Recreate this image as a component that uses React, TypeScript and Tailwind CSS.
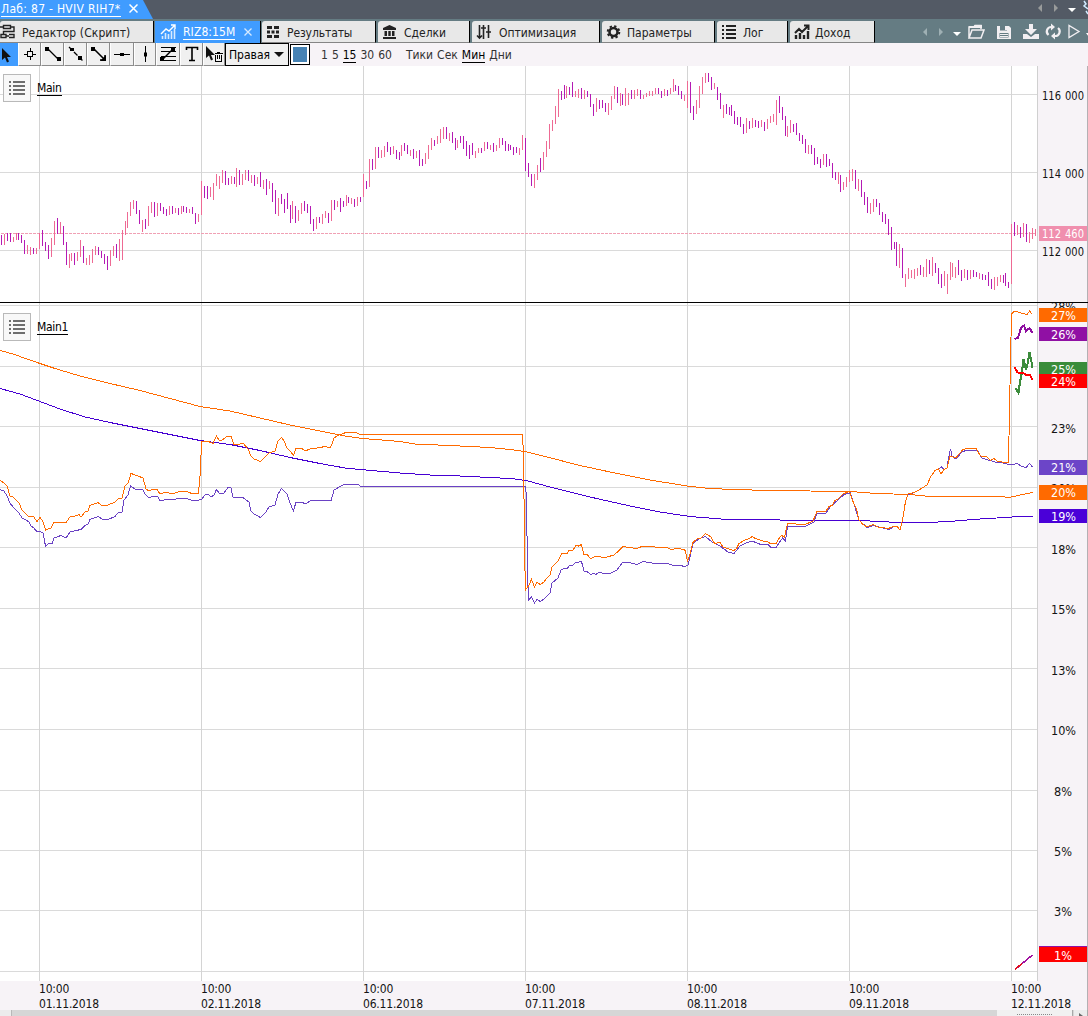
import type { ReactNode } from 'react'

type Bar = [number, number, number]

const GRID_X = [39, 201, 363, 525, 687, 849, 1011]
const PRICE_GRID = [94, 172, 250]
const PCT_GRID = [305, 366, 426, 487, 547, 608, 668, 729, 790, 850, 910, 971]
const DATES = ['01.11.2018', '02.11.2018', '06.11.2018', '07.11.2018', '08.11.2018', '09.11.2018', '12.11.2018']

// x, high, low
const rising: Bar[] = [
  [4, 234, 245], [13, 237, 242], [16, 233, 240], [27, 245, 254], [30, 247, 255], [36, 248, 254], [39, 233, 249],
  [51, 238, 257], [54, 221, 245], [60, 222, 234], [69, 254, 268], [71, 253, 261], [77, 252, 261], [80, 240, 257],
  [86, 258, 265], [89, 255, 265], [92, 249, 263], [95, 246, 255], [110, 250, 266], [113, 246, 256], [119, 239, 261],
  [122, 230, 260], [125, 221, 235], [127, 212, 228], [130, 202, 216], [133, 200, 209], [142, 220, 232], [148, 206, 226],
  [151, 202, 213], [157, 203, 216], [169, 206, 215], [175, 208, 213], [181, 206, 214], [189, 209, 213], [198, 214, 222],
  [201, 181, 215], [210, 187, 197], [213, 183, 200], [216, 174, 186], [219, 176, 189], [222, 170, 183], [231, 176, 184],
  [236, 168, 187], [242, 174, 185], [245, 170, 180], [251, 175, 183], [257, 177, 184], [263, 180, 189], [269, 181, 189],
  [278, 198, 216], [292, 201, 219], [298, 210, 221], [301, 203, 214], [316, 217, 229], [322, 214, 224], [325, 211, 218],
  [331, 200, 221], [337, 201, 207], [346, 195, 206], [351, 198, 204], [357, 197, 206], [363, 174, 197], [369, 159, 187],
  [375, 147, 169], [381, 150, 158], [384, 146, 157], [393, 146, 154], [401, 145, 156], [410, 150, 156], [416, 151, 158],
  [425, 153, 164], [428, 145, 159], [431, 138, 150], [437, 136, 144], [440, 129, 143], [443, 127, 139], [449, 133, 141],
  [457, 140, 148], [475, 151, 158], [478, 148, 153], [484, 142, 151], [490, 145, 150], [496, 145, 151], [499, 138, 148],
  [519, 148, 155], [522, 135, 150], [534, 174, 188], [537, 165, 180], [543, 152, 170], [546, 141, 157], [549, 124, 149],
  [552, 120, 131], [555, 106, 124], [558, 89, 117], [566, 86, 98], [575, 91, 97], [578, 89, 98], [584, 90, 99],
  [596, 98, 112], [608, 103, 115], [611, 96, 110], [614, 86, 99], [620, 93, 106], [625, 88, 106], [628, 93, 105],
  [634, 90, 99], [637, 89, 96], [643, 95, 99], [646, 93, 97], [649, 91, 96], [652, 91, 96], [655, 88, 94],
  [664, 89, 96], [670, 88, 94], [673, 79, 92], [684, 95, 101], [687, 81, 108], [696, 100, 114], [699, 86, 108],
  [702, 77, 94], [705, 73, 83], [714, 83, 89], [723, 105, 118], [746, 118, 133], [752, 118, 128], [761, 120, 127],
  [767, 119, 129], [770, 116, 123], [773, 114, 122], [776, 100, 125], [787, 126, 137], [790, 120, 133], [808, 145, 154],
  [823, 154, 165], [838, 172, 184], [843, 182, 190], [846, 177, 187], [849, 170, 182], [852, 169, 181], [858, 179, 191],
  [870, 203, 214], [873, 199, 212], [899, 244, 268], [905, 274, 287], [908, 268, 279], [911, 270, 278], [914, 269, 279],
  [917, 268, 276], [923, 267, 277], [926, 259, 277], [932, 257, 276], [944, 271, 286], [947, 274, 294], [950, 262, 280],
  [952, 263, 277], [955, 267, 278], [964, 269, 278], [970, 270, 279], [979, 273, 279], [994, 277, 290], [997, 277, 286],
  [1000, 275, 282], [1011, 224, 284], [1017, 225, 235], [1023, 223, 237], [1029, 232, 243], [1032, 228, 239], [1035, 229, 236],
]

const falling: Bar[] = [
  [1, 235, 245], [7, 233, 241], [10, 233, 242], [18, 233, 240], [21, 235, 243], [24, 240, 254], [33, 248, 254],
  [42, 230, 246], [45, 242, 251], [48, 245, 259], [57, 218, 234], [63, 226, 245], [66, 242, 265], [74, 253, 265],
  [83, 246, 263], [98, 247, 255], [101, 251, 258], [104, 254, 264], [107, 256, 270], [116, 244, 258], [136, 201, 214],
  [139, 210, 224], [145, 219, 229], [154, 202, 217], [160, 203, 211], [163, 207, 214], [166, 209, 216], [172, 206, 214],
  [178, 208, 215], [183, 206, 212], [186, 207, 213], [192, 207, 214], [195, 213, 224], [204, 186, 198], [207, 186, 199],
  [225, 171, 185], [228, 178, 185], [234, 177, 184], [239, 170, 185], [248, 170, 181], [254, 175, 186], [260, 172, 187],
  [266, 179, 195], [272, 183, 202], [275, 190, 214], [281, 194, 204], [284, 199, 213], [287, 193, 209], [290, 205, 223],
  [295, 206, 223], [304, 201, 211], [307, 204, 213], [310, 206, 224], [313, 219, 231], [319, 217, 223], [328, 213, 223],
  [334, 200, 210], [340, 198, 212], [343, 201, 207], [348, 197, 203], [354, 199, 207], [360, 197, 202], [366, 181, 189],
  [372, 159, 170], [378, 147, 158], [387, 142, 152], [390, 147, 155], [396, 150, 159], [399, 152, 160], [404, 143, 151],
  [407, 145, 154], [413, 149, 159], [419, 150, 166], [422, 159, 166], [434, 140, 146], [446, 127, 139], [452, 132, 143],
  [455, 138, 150], [460, 136, 143], [463, 136, 149], [466, 141, 156], [469, 145, 159], [472, 143, 155], [481, 148, 153],
  [487, 142, 149], [493, 143, 152], [502, 138, 145], [505, 141, 151], [508, 144, 151], [510, 145, 150], [513, 147, 155],
  [516, 147, 153], [525, 138, 171], [528, 163, 177], [531, 174, 186], [540, 158, 172], [561, 91, 100], [564, 85, 99],
  [569, 87, 95], [572, 82, 97], [581, 88, 99], [587, 91, 97], [590, 94, 107], [593, 104, 116], [599, 100, 109],
  [602, 100, 108], [605, 103, 112], [617, 87, 103], [622, 94, 105], [631, 90, 99], [640, 90, 99], [658, 88, 94],
  [661, 91, 98], [667, 90, 96], [675, 85, 91], [678, 86, 95], [681, 91, 99], [690, 82, 113], [693, 106, 120],
  [708, 73, 82], [711, 77, 90], [717, 87, 100], [720, 93, 109], [726, 104, 114], [729, 107, 115], [731, 105, 116],
  [734, 111, 124], [737, 117, 125], [740, 117, 127], [743, 124, 134], [749, 121, 129], [755, 120, 127], [758, 121, 128],
  [764, 122, 131], [779, 96, 113], [782, 107, 120], [785, 116, 136], [793, 124, 132], [796, 123, 135], [799, 133, 141],
  [802, 135, 144], [805, 139, 153], [811, 145, 154], [814, 148, 165], [817, 157, 164], [820, 159, 168], [826, 154, 167],
  [829, 159, 166], [832, 163, 178], [835, 172, 180], [840, 175, 192], [855, 170, 189], [861, 180, 197], [864, 192, 205],
  [867, 197, 213], [876, 199, 207], [879, 203, 215], [882, 212, 222], [885, 214, 224], [888, 219, 235], [891, 227, 250],
  [894, 242, 249], [896, 242, 266], [902, 248, 278], [920, 265, 275], [929, 260, 274], [935, 263, 273], [938, 268, 284],
  [941, 274, 288], [958, 260, 275], [961, 270, 281], [967, 270, 280], [973, 270, 277], [976, 272, 277], [982, 274, 280],
  [985, 275, 280], [988, 272, 286], [991, 279, 289], [1003, 275, 283], [1005, 273, 286], [1008, 282, 288], [1014, 222, 236],
  [1020, 227, 238], [1026, 224, 242],
]

const slowOrange =
  '0,350.5 13,354 27,359 40,363.5 55,368.5 80,376 110,383.5 140,390.5 170,398.5 200,406.5 230,411 260,418 290,425 320,431 345,436 363,438.5 400,441.5 415,444 460,446 490,447.5 510,449.5 525,451.5 547,457 580,465.5 617,473.5 650,480 687,486 710,488.5 733,489.5 770,490.5 850,491.5 876,493.5 910,494.5 930,496.5 1000,496.5 1009,497.5 1020,495 1033,492.5'
const slowBlue =
  '0,388.5 20,394 40,401.5 60,409 85,417 110,422.5 140,428.5 170,434.5 200,440.5 230,444.5 260,450.5 290,457.5 320,463.5 345,468 360,469.5 400,473 430,475 460,476 500,478 515,479 526,480.5 550,487 590,497 630,506 660,512 690,516.5 727,519.5 780,520 870,521 898,522.5 930,522.5 955,521 980,519 1005,517.5 1020,516.5 1033,516.5'
const fastOrange =
  '0,480.5 4,483 7,486 10,496 13,497 19,503 22,510 28,516 34,517 37,522 40,517 43,522 45.5,530 51,528 54,522.5 66,522.5 70,517 75,516 79,514.5 81,517 85,512 88,511 90,505.5 98,502.5 101,505 108,505 115,502 118,499 122,498 125,486 128,483 131,473.5 138,476 143,478 146,489 149,491 153,489 157,489.5 160,494 165,492.5 173,493.5 180,491.5 187,491.5 193,494 198.5,493 200.5,470 201.5,441 207,441 213,443.5 216.5,436 219,440 222,440 227,436.5 231,436.5 234,444.5 240,444 243,443 248,449 251,456 254,459 260.5,461.5 264,458 269,453 275,451 278,441 281.5,437.5 284,441 287,448 290,451 293.5,455.5 296,448.5 302,448.5 305,451 310,449 320,447.5 325,446.5 330,448 332,444 334,438 339,435 346,432.5 356,432.5 360,434.5 522.5,434.5 522.5,444 523.5,446 524.5,550 525.5,590 529,585 531.5,579.5 534.5,587 537,582.5 540.5,584.5 544,582 547,578 550,575 552,567 554.5,564.5 558,561 561.5,554 567,553.5 569,550.5 573,550 576,545.5 578.5,546 581.5,544.5 584,555 587,554.5 590.5,558.5 597,556 601,557 607,557 614,555 619,550.5 623,546.5 629,547.5 633,548 638,548 643,546 655,547 661,548 667,547.5 671,549.5 678,548.5 684,549.5 685.5,551 687.5,562 690,554 693,542.5 698,538 701,538 705.5,533.5 711,537 714.5,543.5 720,542.5 723,547 729,549 734,550.5 736.5,548.5 739,543.5 745,540 749,538.5 752.5,536.5 755,538.5 763,541 767,541 770,543.5 776,543.5 778.5,539 781.5,535.5 784.5,537 787.5,523.5 805,524.5 813,521 817,511.5 826,511 829,506.5 832,505.5 835,500.5 838,499 843,494 849.5,491.5 853,501.5 856.5,509 859,520 863,524.5 867,527 873,524.5 878,527 888.5,528.5 893,526.5 897,526.5 900,530 902.5,520 905.5,501.5 908,494 914.5,492.5 920.5,489 927,485 930.5,477 935,470.5 938.5,469 941,474 944,469.5 947,468 950,456.5 956,457.5 962.5,450 966.5,448.5 976,448.5 980.5,456 986.5,456.5 990.5,460.5 994,458.5 997,461 1000,461 1003.5,462.5 1008.5,462.5 1009.5,410 1010.5,360 1011.5,314 1014,311.5 1017,311.5 1022.5,313.5 1027,314.5 1029.5,311 1032.5,314.5'
const fastPurple =
  '0,489.5 4,491 7,496 10,503 13,507 19,513 22,518 26,520 29,522 31,526 34,528 37,532 40,531.5 43,533 45.5,546 48,544 52,543.5 54,538 61,535.5 66,538 70,532 76,530.5 81,529.5 85,525.5 88,524 90,519.5 98,516.5 103,519.5 108,519.5 115,516.5 118,513 122,512 124,500 128,495 130.5,486 135,489 143,490 145,494 149,498 153,496 158,497 160,501 166,499.5 173,500 177,498.5 187,498.5 193,501 198,500.5 202,499 205,495 208,494 211,497 214,495 216.5,489.5 219,493 224,493 228,487.5 231,488 233,497 242,497 249,502 251,511 254,514 260.5,517.5 266,512 269,507 275,505 278,494 281.5,488.5 287,494 290,503 293.5,511 296,502 302,502 305,504 312,500 325,500.5 331,501 334,490 340,486.5 344,484.5 358,484.5 361,486.5 525.5,486.5 526.5,497 527.5,573 528.5,600 531.5,597 534.5,603 537,599.5 540.5,601.5 544,599 550,593 552,583 558,578 561,570 564,568.5 567,569 569,566 573,565 575,563 581.5,561.5 584,571 587,571.5 591,574.5 594,573 596,574.5 599,572 604,573.5 611,573 617,570 622,563 629,562.5 637,564.5 643,561.5 655,563.5 668,563.5 672,565 680,565.5 685,566.5 688,565 693,544 699,538.5 705.5,536.5 712,542 720,546 728,552 734,553.5 740,546 746,543 752,541 757,543 762,545 768,544.5 771,547.5 776,547.5 782.5,538 785.5,541 787.5,526 805,526.5 814,522 817,513 826,513 830,507 838,500 844,494.5 850.5,493 854,504 859,520 867,527.5 873,525.5 889,529.5 894,526.5 897,526.5 900,530 902.5,520 905.5,501.5 908,494.5 914.5,492.5 920.5,489 927,485 930.5,477 935,470.5 938.5,469 941.5,467 944,469.5 947,468 948.5,458 950.5,449 952,456 956,459 962,452 967,450 977,450 982,458 990,460.5 997,462.5 1003,463 1009,464.5 1012,465 1017,463.5 1021,466 1026,467.5 1029.5,463.5 1032.5,467'

const barsPath = (bars: Bar[]) => bars.map(([x, hi, lo]) => `M${x + 0.5} ${hi}V${lo}`).join('')

function Grid({ rows, top, bottom }: { rows: number[]; top: number; bottom: number }) {
  return (
    <g fill="#dadada">
      {rows.map(y => <rect key={y} x={0} y={y} width={1037} height={1} />)}
      {GRID_X.map(x => <rect key={x} x={x} y={top} width={1} height={bottom - top} fill="#d4d4d4" />)}
    </g>
  )
}

function AxisLabel({ y, text, w = 25, x = 1051, fill = '#141414' }: { y: number; text: string; w?: number; x?: number; fill?: string }) {
  return (
    <text x={x} y={y} textLength={w} lengthAdjust="spacingAndGlyphs" fill={fill} fontSize={12} wordSpacing={1}>
      {text}
    </text>
  )
}

function Tag({ top, h, color, text }: { top: number; h: number; color: string; text: string }) {
  return (
    <g>
      <rect x={1039} y={top} width={48} height={h} fill={color} />
      <AxisLabel y={top + 12} text={text} fill="#fff" />
    </g>
  )
}

function Legend({ name, cls }: { name: string; cls: string }) {
  return (
    <div className={`absolute left-[3px] flex items-center gap-[6px] ${cls}`}>
      <div className="w-7 h-7 border border-[#b9b9b9] bg-[#f8f8f8] flex items-center justify-center">
        <svg width="16" height="14" fill="#6e6e6e" shapeRendering="crispEdges">
          {[0, 4, 8, 12].map(y => (
            <g key={y}>
              <rect x="0" y={y} width="2" height="2" />
              <rect x="4" y={y} width="12" height="2" />
            </g>
          ))}
        </svg>
      </div>
      <span className="mt-px text-[12px] leading-[13px] border-b border-black text-black tracking-[-0.3px]">{name}</span>
    </div>
  )
}

const ICONS: Record<string, ReactNode> = {
  editor: (
    <g fill="none" stroke="#222" strokeWidth="1.4">
      <path d="M3.500 1.500h7v3h-7zM10.500 3H14v4.500H3.500V10M1 10.500h5v3H1zM6 12h3M9 10.500h5v3H9M0 3h3" />
    </g>
  ),
  chart: (
    <g fill="none" stroke="#fff">
      <path d="M1 10l5-5 3 2 6-6M11 1h4v4" strokeWidth="1.4" />
      <path d="M2.5 15v-3M5.5 15V9M8.5 15v-5M11.5 15V7M14.5 15V5" strokeWidth="1.6" opacity=".8" />
    </g>
  ),
  results: (
    <path d="M1 2h5v3H1zM8 2h5v3H8zM1 6.5h3v3H1zM5.500 6.500h3v3h-3zM10 6.500h3v3h-3zM1 11h5v3H1zM8 11h5v3H8z" fill="#222" />
  ),
  bank: <path d="M7.500 1L14 4v2H1V4zM2.500 7H5v5H2.500zM6.300 7h2.400v5H6.300zM10 7h2.500v5H10zM1 13h13v2H1z" fill="#222" />,
  sliders: (
    <path d="M3.500 1v13M7.500 1v14M12.500 1v13M5 4h5M10 8h5M1 11.500l2.500 2.500 2.500-2.500" stroke="#222" strokeWidth="1.600" fill="none" />
  ),
  gear: (
    <g fill="none" stroke="#222">
      <circle cx="7.5" cy="8" r="4" strokeWidth="2.6" />
      <circle cx="7.5" cy="8" r="5.8" strokeWidth="2" strokeDasharray="2.3 2.25" />
    </g>
  ),
  log: (
    <path d="M0 1h2v2H0zM4 1h10v2H4zM0 5h2v2H0zM4 5h10v2H4zM0 9h2v2H0zM4 9h10v2H4zM0 13h2v2H0zM4 13h10v2H4z" fill="#222" />
  ),
  income: (
    <g fill="none" stroke="#222">
      <path d="M1 9l4-4 3 3 6-6M10 1.500h4.500V6" strokeWidth="2" />
      <path d="M2 15v-4M6 15V9M10 15v-4M14 15V7" strokeWidth="2.400" />
    </g>
  ),
}

function Tab({ icon, label, cls, text }: { icon: string; label: string; cls: string; text: string }) {
  return (
    <div className={`h-[22px] shrink-0 flex items-center rounded-tl-[3px] bg-[#e8e8e8] border-r border-r-black border-b border-b-[#858585] ${cls}`}>
      <svg width="16" height="16" className="shrink-0">{ICONS[icon]}</svg>
      <span className={`whitespace-nowrap pt-[2px] text-[12px] leading-none text-[#222] ${text}`}>{label}</span>
    </div>
  )
}

function Tool({ w, children }: { w: string; children: ReactNode }) {
  return (
    <div className={`h-[23px] shrink-0 bg-[#f0f0f0] border-r border-b border-[#8c8c8c] border-l border-l-white flex items-center justify-center ${w}`}>
      <svg width="18" height="18" fill="none" stroke="#000">{children}</svg>
    </div>
  )
}

export default function App() {
  return (
    <div
      className="w-[1088px] h-[1016px] overflow-hidden flex flex-col bg-[#f7f3f7]"
      style={{ fontFamily: '"DejaVu Sans Condensed", "DejaVu Sans", sans-serif', fontStretch: 'condensed' }}
    >
      {/* window tabs */}
      <div className="h-[19px] shrink-0 bg-[#535a65] flex">
        <div
          className="w-[153px] bg-[#409cff] flex items-center pl-px text-white"
          style={{ clipPath: 'polygon(0 0, 143px 0, 153px 100%, 0 100%)' }}
        >
          <span className="text-[12px] leading-[13px] whitespace-nowrap border-b border-white w-[120px] tracking-[0.3px]">Лаб: 87 - HVIV RIH7*</span>
          <svg width="9" height="9" className="ml-2 mb-[2px]" stroke="#fff" strokeWidth="1.5"><path d="M.5 .5l8 8M8.500 .5l-8 8" /></svg>
        </div>
        <svg width="50" height="19" className="ml-auto">
          <path d="M4 4v8l-4-4z" fill="#999b9b" />
          <path d="M16 4v8l4-4z" fill="#999b9b" />
          <path d="M30 8h8l-4 4z" fill="#fff" />
          <path d="M46 1l2 3-2 2 4 3M48 11l2 3" stroke="#cfeaff" strokeWidth="1.5" fill="none" />
        </svg>
      </div>

      {/* document tabs */}
      <div className="h-6 shrink-0 bg-[#657c83] flex items-end">
        <Tab icon="editor" label="Редактор (Скрипт)" cls="w-[154px]" text="ml-[6px] tracking-[0.1px]" />
        <div className="h-[22px] w-[106px] ml-px mr-px shrink-0 bg-[#409cff] border-r border-black flex items-center text-white">
          <svg width="16" height="16" className="ml-[5px] shrink-0">{ICONS.chart}</svg>
          <span className="ml-[7px] mt-[2px] text-[12px] leading-[13px] border-b border-white tracking-[0.1px]">RIZ8:15M</span>
          <svg width="8" height="8" className="ml-[9px]" stroke="#d6eaff" strokeWidth="1.3"><path d="M.5 .5l7 7M7.500 .5l-7 7" /></svg>
        </div>
        <Tab icon="results" label="Результаты" cls="w-[114px] mr-[2px] pl-1" text="ml-[5px] tracking-[-0.1px]" />
        <Tab icon="bank" label="Сделки" cls="w-[92px] mr-[2px] pl-1" text="ml-[6px]" />
        <Tab icon="sliders" label="Оптимизация" cls="w-[128px] mr-[2px] pl-1" text="ml-[7px]" />
        <Tab icon="gear" label="Параметры" cls="w-[113px] mr-[2px] pl-1" text="ml-[5px]" />
        <Tab icon="log" label="Лог" cls="w-[71px] mr-[2px] pl-[5px]" text="ml-[5px]" />
        <Tab icon="income" label="Доход" cls="w-[85px] pl-1" text="ml-[5px]" />
        <svg width="168" height="24" className="ml-auto shrink-0" fill="none" stroke="#f2eff2">
          <g stroke="none">
            <path d="M7 9v8l-4-4z" fill="#9fb0b4" />
            <path d="M19 9v8l4-4z" fill="#9fb0b4" />
            <path d="M33 13h8l-4 4z" fill="#fff" />
            <path d="M166 14h6l-3 4z" fill="#fff" />
          </g>
          <path d="M49 19V8h5l1-1.500h6V10M49 19l3-8h12l-3 8z" strokeWidth="1.500" />
          <path d="M49 7h5l1-1h7v3H49z" fill="#f2eff2" stroke="none" />
          <path d="M78 7h11l2 2v11H77V7z" fill="#f2eff2" stroke="none" />
          <path d="M80 6.500h7v5h-7zM79.500 14h9v4.500h-9z" fill="#657c83" stroke="none" />
          <path d="M85 7h2v4h-2zM80 15h8v1h-8zM80 17h8v1h-8z" fill="#f2eff2" stroke="none" />
          <path d="M109 5h4v5h4l-6 6-6-6h4zM103 15h4l4 3 4-3h4v5h-16z" fill="#f2eff2" stroke="none" />
          <path d="M128.500 16a4.500 4.500 0 0 1 3-8h1M138 9a4.500 4.500 0 0 1-3 8h-2" strokeWidth="2.200" />
          <path d="M131 4.500v7l4-3.500zM135 20.500v-7l-4 3.500z" fill="#f2eff2" stroke="none" />
          <path d="M149 6.500v12l10-6z" strokeWidth="1.300" />
        </svg>
      </div>

      {/* drawing tools */}
      <div className="h-[23px] shrink-0 flex">
        <div className="w-[18px] h-[23px] shrink-0 bg-[#409cff] flex items-center">
          <svg width="14" height="18"><path d="M2 2v12l3-2.500 2 5 2-1-2-4.500h4z" fill="#111" /></svg>
        </div>
        <Tool w="w-[23px]">
          <path d="M6.500 6.500h5v5h-5zM9.500 3v3M9.500 12v3M3 9.500h3M12 9.500h3" shapeRendering="crispEdges" />
        </Tool>
        <Tool w="w-[23px]">
          <path d="M3 3l12 12" strokeWidth="1.300" /><path d="M1 2h4v4H1zM13 12h4v4h-4z" fill="#000" stroke="none" />
        </Tool>
        <Tool w="w-[23px]">
          <path d="M2 2l14 14" strokeWidth="1.300" strokeDasharray="5 2" /><path d="M3 3h4v3H3zM11 11h4v4h-4z" fill="#000" stroke="none" />
        </Tool>
        <Tool w="w-[23px]">
          <path d="M3 3l12 12M15 10v5h-5" strokeWidth="1.500" /><path d="M1 2h4v4H1zM16 16v-6l-6 6z" fill="#000" stroke="none" />
        </Tool>
        <Tool w="w-[24px]">
          <path d="M1 9.500h16" /><path d="M7 8h4v3H7z" fill="#000" stroke="none" />
        </Tool>
        <Tool w="w-[22px]">
          <path d="M9.500 1v16" /><path d="M8 7.500h3v4H8z" fill="#000" stroke="none" />
        </Tool>
        <Tool w="w-[24px]">
          <path d="M2 2.500h15M2 6.500h15M2 11.500h15M2 15.500h15" shapeRendering="crispEdges" />
          <path d="M3 15L15 3" strokeWidth="1.500" /><path d="M1 12h4v4H1zM12 3h4v3h-4z" fill="#000" stroke="none" />
        </Tool>
        <Tool w="w-[23px]">
          <path d="M3.500 5V2.500h11V5M9 2.500v13M6 15.500h6" strokeWidth="1.600" />
        </Tool>
        <Tool w="w-[22px]">
          <path d="M1 1v12l3-2.500 2 5 2-1-2-4.500h4z" fill="#111" stroke="none" />
          <path d="M9.500 8.500h8M12 7.500h3M10.500 10v6h6v-6M12.500 10v4M14.500 10v4" shapeRendering="crispEdges" />
        </Tool>
        <div className="w-[64px] h-[23px] shrink-0 border border-black bg-[#f0f0f0] flex items-center pl-[3px]">
          <span className="text-[12px] leading-none pt-px w-[45px]">Правая</span>
          <svg width="10" height="6"><path d="M0 0h10L5 5z" fill="#111" /></svg>
        </div>
        <div className="w-5 h-[21px] mt-px ml-px shrink-0 border border-black bg-white p-[2px]">
          <div className="w-full h-full bg-[#4682b4]" />
        </div>
        <div className="flex items-center gap-[4px] ml-[11px] pt-[2px] text-[12px] leading-[13px] text-[#333]">
          <span>1</span>
          <span>5</span>
          <span className="border-b border-black text-black">15</span>
          <span>30</span>
          <span>60</span>
          <span className="ml-[10px]">Тики</span>
          <span>Сек</span>
          <span className="border-b border-black text-black">Мин</span>
          <span>Дни</span>
        </div>
      </div>

      {/* price pane */}
      <div className="h-[236px] shrink-0 relative">
        <svg width="1088" height="236" viewBox="0 66 1088 236" className="block" shapeRendering="crispEdges">
          <rect x="0" y="66" width="1037" height="236" fill="#fff" />
          <Grid rows={PRICE_GRID} top={66} bottom={302} />
          <path d="M1 233.500H1037" stroke="#f0a0b4" strokeDasharray="3 1" />
          <path d={barsPath(rising)} stroke="#ee6a94" />
          <path d={barsPath(falling)} stroke="#b41ab4" />
          <rect x="1037" y="66" width="1" height="236" fill="#d0d0d0" />
          <rect x="1087" y="66" width="1" height="236" fill="#b4b0b4" />
          <AxisLabel x={1042} y={100} w={42} text="116 000" />
          <AxisLabel x={1042} y={178} w={42} text="114 000" />
          <AxisLabel x={1042} y={256} w={42} text="112 000" />
          <rect x="1039" y="226" width="48" height="15" fill="#f08fae" />
          <AxisLabel x={1042} y={238} w={42} text="112 460" fill="#fff" />
        </svg>
        <Legend name="Main" cls="top-2" />
      </div>

      {/* volatility pane */}
      <div className="h-[679px] shrink-0 relative border-t border-black">
        <svg width="1088" height="678" viewBox="0 303 1088 678" className="block" shapeRendering="crispEdges">
          <rect x="0" y="303" width="1037" height="678" fill="#fff" />
          <Grid rows={PCT_GRID} top={303} bottom={981} />
          <rect x="1037" y="303" width="1" height="678" fill="#d0d0d0" />
          <rect x="1087" y="303" width="1" height="678" fill="#b4b0b4" />
          <g fill="none" strokeWidth="1">
            <polyline points={slowOrange} stroke="#ff6a00" />
            <polyline points={slowBlue} stroke="#4600d2" />
            <polyline points={fastPurple} stroke="#6a42c4" />
            <polyline points={fastOrange} stroke="#ff6a00" />
          </g>
          <g fill="none" strokeWidth="2">
            <polyline points="1014.5,339 1018,338 1021,328 1024,325.5 1026,331 1029.5,328 1032.5,333" stroke="#8e0fa0" />
            <polyline points="1015,389 1016.5,389.5 1018.500,393 1020,382 1022,372 1023.500,359 1026,370 1028,362 1029.500,352 1031,359 1032.500,368" stroke="#3c8c3c" />
            <polyline points="1014.5,367 1017.5,372.5 1023.5,373 1026,375 1030,375 1032.5,380" stroke="#f00" />
            <polyline points="1015,969.5 1032.5,955" stroke="#a010a0" strokeWidth="1.500" />
            <polyline points="1015,969.5 1022,963.500" stroke="#e01020" strokeWidth="1.500" />
          </g>
          <AxisLabel y={311} text="28%" />
          <AxisLabel y={433} text="23%" />
          <AxisLabel y={493} text="20%" />
          <AxisLabel y={554} text="18%" />
          <AxisLabel y={614} text="15%" />
          <AxisLabel y={675} text="13%" />
          <AxisLabel y={735} text="10%" />
          <AxisLabel x={1054} w={18} y={796} text="8%" />
          <AxisLabel x={1054} w={18} y={856} text="5%" />
          <AxisLabel x={1054} w={18} y={916} text="3%" />
          <Tag top={308} h={14} color="#ff6a00" text="27%" />
          <Tag top={327} h={14} color="#9010a4" text="26%" />
          <Tag top={362} h={14} color="#3a8c3a" text="25%" />
          <Tag top={374} h={14} color="#f00" text="24%" />
          <Tag top={460} h={15} color="#6c45c8" text="21%" />
          <Tag top={485} h={15} color="#ff6a00" text="20%" />
          <Tag top={509} h={14} color="#4a00d8" text="19%" />
          <rect x="1039" y="946" width="48" height="1" fill="#9010a4" />
          <rect x="1039" y="947" width="48" height="15" fill="#f00" />
          <AxisLabel x={1054} w={18} y={960} text="1%" fill="#fff" />
        </svg>
        <Legend name="Main1" cls="top-[10px]" />
      </div>

      {/* time axis */}
      <div className="h-[29px] shrink-0 flex pl-[39px] pt-px border-r border-[#b4b0b4]">
        {DATES.map(d => (
          <div key={d} className="w-[162px] shrink-0 text-[12px] leading-[15px] text-[#141414] tracking-[-0.2px]">
            <div>10:00</div>
            <div>{d}</div>
          </div>
        ))}
      </div>

      {/* scrollbar */}
      <div className="h-[6px] shrink-0 bg-[#d6d6d6] flex">
        <div className="w-3 bg-[#ececec] border-r border-[#b8b8b8]" />
        <div className="ml-[985px] w-[76px] bg-[#f1f1f1] border-r border-[#a8a8a8] flex justify-center pt-1">
          <div className="w-[35px] border-t border-dotted border-[#888]" />
        </div>
        <div className="w-[14px] ml-px bg-[#ececec] border-r border-[#a8a8a8] flex justify-center">
          <svg width="4" height="6"><path d="M0 3l4 3H0z" fill="#666" /></svg>
        </div>
      </div>
    </div>
  )
}
